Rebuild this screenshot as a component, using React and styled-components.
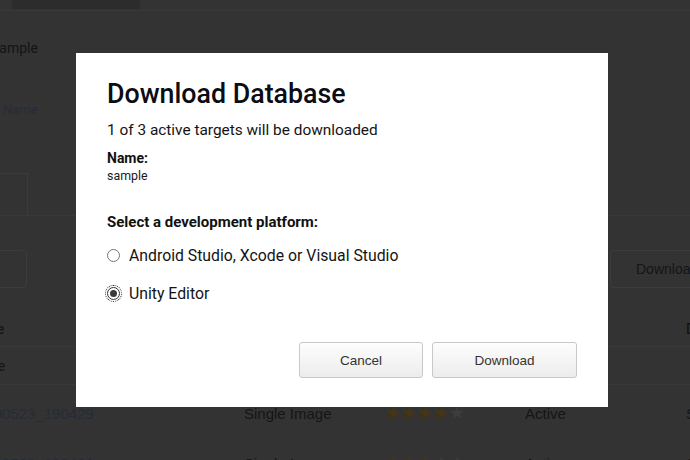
import React from "react";
import styled, { createGlobalStyle } from "styled-components";

const Global = createGlobalStyle`
  html, body { margin: 0; padding: 0; }
  body { background: #333333; font-family: Roboto, "Liberation Sans", sans-serif; overflow: hidden; }
  * { box-sizing: border-box; }
`;

/* ---------- background page (dimmed) ---------- */
const Page = styled.div`
  width: 690px;
  height: 460px;
  overflow: hidden;
  background: #333333;
  color: #161616;
  display: flex;
  flex-direction: column;
  & > * { flex-shrink: 0; }
`;

const TopBar = styled.div`
  height: 11px;
  border-bottom: 1px solid #383838;
  display: flex;
  padding-left: 12px;
`;

const TopTab = styled.div`
  width: 128px;
  height: 9px;
  background: #2c2c2c;
`;

const Crumb = styled.div`
  margin-top: 29px;
  margin-left: -9px;
  font-size: 14px;
  line-height: 16px;
  color: #141414;
`;

const NameLink = styled.div`
  margin-top: 46px;
  margin-left: -37px;
  font-size: 13px;
  line-height: 16px;
  color: #262c36;
  white-space: nowrap;
`;

const TabRow = styled.div`
  margin-top: 55px;
  height: 43px;
  display: flex;
  border-bottom: 1px solid #393939;
`;

const TabBox = styled.div`
  width: 29px;
  margin-left: -1px;
  border: 1px solid #3b3b3b;
  border-bottom: none;
`;

const Toolbar = styled.div`
  margin-top: 34px;
  height: 38px;
  display: flex;
  justify-content: space-between;
`;

const GhostButton = styled.div`
  width: ${(p) => p.$w}px;
  height: 38px;
  border: 1px solid #3c3c3c;
  border-radius: 4px;
  ${(p) => (p.$left ? "margin-left: -40px;" : "margin-right: -80px;")}
  font-family: "Liberation Sans", Arial, sans-serif;
  font-size: 14px;
  color: #151515;
  display: flex;
  align-items: center;
  padding-left: 25px;
  white-space: nowrap;
`;

const Table = styled.div`
  margin-top: 24px;
  display: flex;
  flex-direction: column;
  & > * { flex-shrink: 0; }
`;

const Row = styled.div`
  display: grid;
  grid-template-columns: 244px 141px 140px 161px 40px;
  height: ${(p) => p.$h}px;
  align-items: center;
  border-bottom: ${(p) => (p.$line ? "1px solid #393939" : "none")};
  font-size: 14px;
  color: #151515;
`;

const Cell = styled.div`
  white-space: nowrap;
  font-family: ${(p) => (p.$arial ? '"Liberation Sans", Arial, sans-serif' : 'Roboto, sans-serif')};
  font-weight: ${(p) => (p.$bold ? 500 : 400)};
  font-size: ${(p) => (p.$arial ? 15 : 14)}px;
`;

const FirstCell = styled(Cell)`
  margin-left: ${(p) => p.$shift}px;
  color: ${(p) => (p.$link ? "#262c36" : "#151515")};
`;

const Stars = styled.div`
  display: flex;
  font-size: 18px;
  line-height: 18px;
`;

const Star = styled.span`
  color: ${(p) => (p.$on ? "#46360f" : "#3d3d3d")};
`;

const Rating = ({ n }) => (
  <Stars>
    {[0, 1, 2, 3, 4].map((i) => (
      <Star key={i} $on={i < n}>★</Star>
    ))}
  </Stars>
);

/* ---------- modal ---------- */
const Overlay = styled.div`
  position: fixed;
  inset: 0;
  display: flex;
  align-items: flex-start;
  justify-content: flex-start;
  padding: 53px 0 0 76px;
`;

const Dialog = styled.div`
  width: 532px;
  height: 354px;
  background: #ffffff;
  padding: 25px 31px 29px 31px;
  display: flex;
  flex-direction: column;
  color: #111111;
`;

const Title = styled.h1`
  margin: 0;
  font-family: Roboto, sans-serif;
  font-weight: 500;
  font-size: 26.8px;
  line-height: 32px;
  color: #0c0c14;
`;

const Subtitle = styled.p`
  margin: 10px 0 0;
  font-size: 15.4px;
  line-height: 20px;
  color: #141414;
`;

const Label = styled.div`
  margin-top: ${(p) => p.$mt}px;
  font-weight: 700;
  font-size: ${(p) => p.$size}px;
  line-height: ${(p) => p.$lh}px;
  color: #111;
`;

const Value = styled.div`
  margin-top: 1px;
  font-size: 12.4px;
  line-height: 16px;
  color: #1a1a1a;
`;

const Options = styled.div`
  margin-top: 11px;
  display: flex;
  flex-direction: column;
  gap: 14px;
`;

const Option = styled.label`
  display: flex;
  align-items: center;
  gap: 9px;
  height: 24px;
  font-size: 15.8px;
  color: #141414;
`;

const Radio = styled.span`
  width: 13px;
  height: 13px;
  border-radius: 50%;
  border: 1px solid ${(p) => (p.$checked ? "#333" : "#777")};
  background: #fff;
  display: flex;
  align-items: center;
  justify-content: center;
  outline: ${(p) => (p.$checked ? "1px dotted #222" : "none")};
  outline-offset: 1px;
  &::after {
    content: "";
    width: 7px;
    height: 7px;
    border-radius: 50%;
    background: ${(p) => (p.$checked ? "#3a3a3a" : "transparent")};
  }
`;

const Actions = styled.div`
  margin-top: auto;
  display: flex;
  justify-content: flex-end;
  gap: 9px;
`;

const Button = styled.button`
  width: ${(p) => p.$w}px;
  height: 36px;
  border: 1px solid #c8c8c8;
  border-radius: 3px;
  background: linear-gradient(#fdfdfd, #ececec);
  font-family: "Liberation Sans", Arial, sans-serif;
  font-size: 13.5px;
  color: #333;
  padding: 0;
`;

export default function App() {
  return (
    <>
      <Global />
      <Page>
        <TopBar>
          <TopTab />
        </TopBar>
        <Crumb>Sample</Crumb>
        <NameLink>Target Name</NameLink>
        <TabRow>
          <TabBox />
        </TabRow>
        <Toolbar>
          <GhostButton $w={67} $left />
          <GhostButton $w={160}>Download Database</GhostButton>
        </Toolbar>
        <Table>
          <Row $h={35} $line>
            <FirstCell $shift={-26} $bold>Type</FirstCell>
            <Cell />
            <Cell />
            <Cell />
            <Cell $bold>Date</Cell>
          </Row>
          <Row $h={38} $line>
            <FirstCell $shift={-28}>None</FirstCell>
            <Cell />
            <Cell />
            <Cell />
            <Cell />
          </Row>
          <Row $h={56}>
            <FirstCell $shift={-88} $link $arial>sample_20190523_190429</FirstCell>
            <Cell $arial>Single Image</Cell>
            <Rating n={4} />
            <Cell $arial>Active</Cell>
            <Cell $arial>Sep</Cell>
          </Row>
          <Row $h={44}>
            <FirstCell $shift={-88} $link $arial>sample_20190523_190431</FirstCell>
            <Cell $arial>Single Image</Cell>
            <Rating n={3} />
            <Cell $arial>Active</Cell>
            <Cell $arial>Sep</Cell>
          </Row>
        </Table>
      </Page>
      <Overlay>
        <Dialog role="dialog">
          <Title>Download Database</Title>
          <Subtitle>1 of 3 active targets will be downloaded</Subtitle>
          <Label $mt={9} $size={14} $lh={18}>Name:</Label>
          <Value>sample</Value>
          <Label $mt={28} $size={15} $lh={20}>Select a development platform:</Label>
          <Options>
            <Option>
              <Radio />
              Android Studio, Xcode or Visual Studio
            </Option>
            <Option>
              <Radio $checked />
              Unity Editor
            </Option>
          </Options>
          <Actions>
            <Button $w={124}>Cancel</Button>
            <Button $w={145}>Download</Button>
          </Actions>
        </Dialog>
      </Overlay>
    </>
  );
}
